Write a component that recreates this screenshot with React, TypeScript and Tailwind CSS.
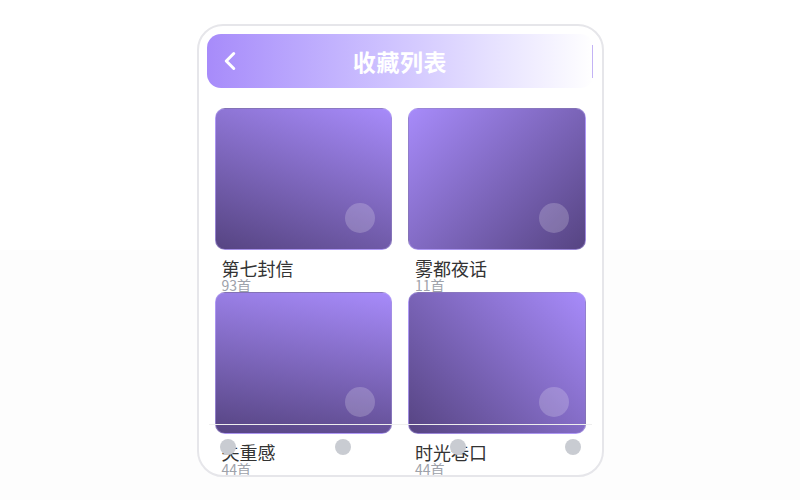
import { ChevronLeft } from "lucide-react";

const albums = [
  { title: "第七封信", count: "93首", bg: "bg-linear-[200deg]" },
  { title: "雾都夜话", count: "11首", bg: "bg-linear-[135deg]" },
  { title: "失重感", count: "44首", bg: "bg-linear-[190deg]" },
  { title: "时光巷口", count: "44首", bg: "bg-linear-[225deg]" },
];

export default function App() {
  return (
    <div className="min-h-screen w-full bg-[linear-gradient(to_bottom,#ffffff_50%,#fdfdfd_50%)] flex justify-center pt-6 font-['Noto_Sans_CJK_SC',sans-serif]">
      <div className="relative w-[407px] h-[453px] rounded-[26px] border-2 border-[#e6e6ea] bg-white overflow-hidden">
        {/* header */}
        <div className="p-2">
          <div className="relative h-[54px] rounded-[14px] bg-linear-to-r from-[#a78bfa] to-white flex items-center justify-center">
            <ChevronLeft className="absolute left-[8px] top-[12px] w-[30px] h-[30px] text-white" strokeWidth={2.4} />
            <h1 className="text-[23px] font-bold text-white tracking-wide">收藏列表</h1>
            <div className="absolute right-[1px] top-[11px] bottom-[10px] w-px bg-[#c3b3f5]" />
          </div>
        </div>

        {/* grid */}
        <div className="grid grid-cols-2 gap-x-4 px-4 pt-3">
          {albums.map((a) => (
            <div key={a.title}>
              <div
                className={`relative h-[142px] rounded-[10px] border border-[#c4b5fd]/40 ${a.bg} from-[#a78bfa] to-[#564482]`}
              >
                <div className="absolute right-4 bottom-4 w-[30px] h-[30px] rounded-full bg-white/20" />
              </div>
              <div className="pl-[7px] pt-2">
                <div className="text-[18px] leading-5 text-[#333]">{a.title}</div>
                <div className="text-[14px] leading-[14px] text-[#9ea2aa]">{a.count}</div>
              </div>
            </div>
          ))}
        </div>

        {/* bottom nav */}
        <div className="absolute left-[10px] right-[10px] bottom-0 h-[51px] border-t border-[#eeeeee] flex justify-between px-[11px] pt-[14px]">
          {[0, 1, 2, 3].map((i) => (
            <div key={i} className="w-4 h-4 rounded-full bg-[#c9ccd2]" />
          ))}
        </div>
      </div>
    </div>
  );
}
